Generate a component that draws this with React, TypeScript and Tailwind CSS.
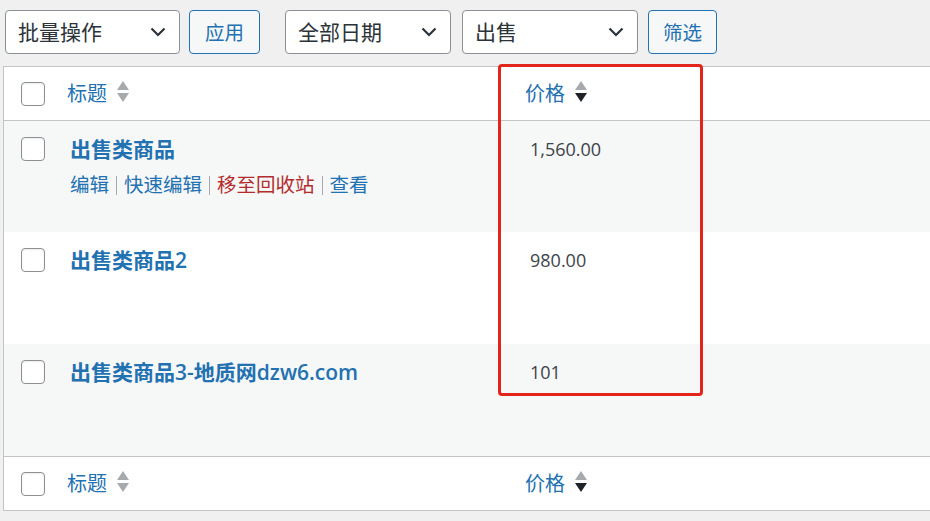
import React from "react";

type Row = { title: string; price: string; actions?: boolean; alt?: boolean; h: string };

const rows: Row[] = [
    { title: "出售类商品", price: "1,560.00", actions: true, alt: true, h: "h-[111px]" },
    { title: "出售类商品2", price: "980.00", h: "h-[112px]" },
    { title: "出售类商品3-地质网dzw6.com", price: "101", alt: true, h: "h-[112px]" },
];

function SortIcon({ active }: { active?: boolean }) {
    return (
        <svg width="12" height="24" viewBox="0 0 12 24" className="ml-[10px] mb-[6px] shrink-0">
            <polygon points="0,11 6,2 12,11" fill="#a7aaad" />
            <polygon points="0,14 12,14 6,23" fill={active ? "#1d2327" : "#a7aaad"} />
        </svg>
    );
}

function Checkbox() {
    return <div className="w-[24px] h-[24px] shrink-0 rounded-[4px] border border-[#8c8f94] bg-white shadow-[inset_0_1px_2px_rgba(0,0,0,0.08)]" />;
}

function Sep() {
    return <span className="inline-block w-px h-[19px] mx-[7px] bg-[#a7aaad]" />;
}

function FakeSelect({ label, width }: { label: string; width: string }) {
    return (
        <div className={`${width} h-[44px] flex items-center justify-between pl-[12px] pr-[13px] bg-white border border-[#8c8f94] rounded-[4px] text-[21px] text-[#2c3338] leading-none`}>
            <span>{label}</span>
            <svg width="16" height="10" viewBox="0 0 16 10">
                <path d="M1.5 1.5 L8 8 L14.5 1.5" fill="none" stroke="#2c3338" strokeWidth="2.2" />
            </svg>
        </div>
    );
}

function Button({ label, width }: { label: string; width: string }) {
    return (
        <div className={`${width} h-[44px] flex items-center justify-center pt-[2px] bg-[#f6f7f7] border border-[#2271b1] rounded-[4px] text-[19.5px] text-[#2271b1] leading-none`}>
            {label}
        </div>
    );
}

function HeadRow({ border }: { border: string }) {
    return (
        <div className={`h-[54px] flex items-center bg-white ${border} border-[#c3c4c7]`}>
            <div className="w-[56px] pl-[17px] shrink-0">
                <Checkbox />
            </div>
            <div className="w-[455px] pl-[7px] shrink-0 flex items-center text-[20px] leading-[24px] text-[#2271b1]">
                <span>标题</span>
                <SortIcon />
            </div>
            <div className="pl-[10px] flex items-center text-[20px] leading-[24px] text-[#2271b1]">
                <span>价格</span>
                <SortIcon active />
            </div>
        </div>
    );
}

export default function App() {
    return (
        <div className="relative w-[930px] h-[521px] overflow-hidden bg-[#f0f0f1] font-['Open_Sans','Noto_Sans_CJK_SC',sans-serif]">
            <div className="flex items-center pt-[10px] pl-[5px]">
                <FakeSelect label="批量操作" width="w-[175px]" />
                <div className="ml-[9px]"><Button label="应用" width="w-[71px]" /></div>
                <div className="ml-[25px]"><FakeSelect label="全部日期" width="w-[166px]" /></div>
                <div className="ml-[11px]"><FakeSelect label="出售" width="w-[176px]" /></div>
                <div className="ml-[10px]"><Button label="筛选" width="w-[69px]" /></div>
            </div>

            <div className="mt-[12px] ml-[3px] w-[940px] border border-[#c3c4c7]">
                <HeadRow border="border-b" />
                {rows.map((r) => (
                    <div key={r.title} className={`${r.h} flex items-start pt-[16px] ${r.alt ? "bg-[#f6f7f7]" : "bg-white"}`}>
                        <div className="w-[56px] pl-[17px] shrink-0">
                            <Checkbox />
                        </div>
                        <div className="w-[455px] pl-[10px] shrink-0">
                            <div className="text-[21px] leading-[24px] font-semibold text-[#2271b1]">{r.title}</div>
                            {r.actions && (
                                <div className="mt-[12px] text-[19.5px] leading-[24px] text-[#2271b1] flex items-center">
                                    <span>编辑</span>
                                    <Sep />
                                    <span>快速编辑</span>
                                    <Sep />
                                    <span className="text-[#b32d2e]">移至回收站</span>
                                    <Sep />
                                    <span>查看</span>
                                </div>
                            )}
                        </div>
                        <div className="pl-[15px] text-[18px] leading-[24px] text-[#3c434a]">{r.price}</div>
                    </div>
                ))}
                <HeadRow border="border-t" />
            </div>

            {/* annotation box over the price column */}
            <div className="absolute left-[498px] top-[64px] w-[205px] h-[332px] border-[3px] border-[#e3241b] rounded-[4px] pointer-events-none" />
        </div>
    );
}
